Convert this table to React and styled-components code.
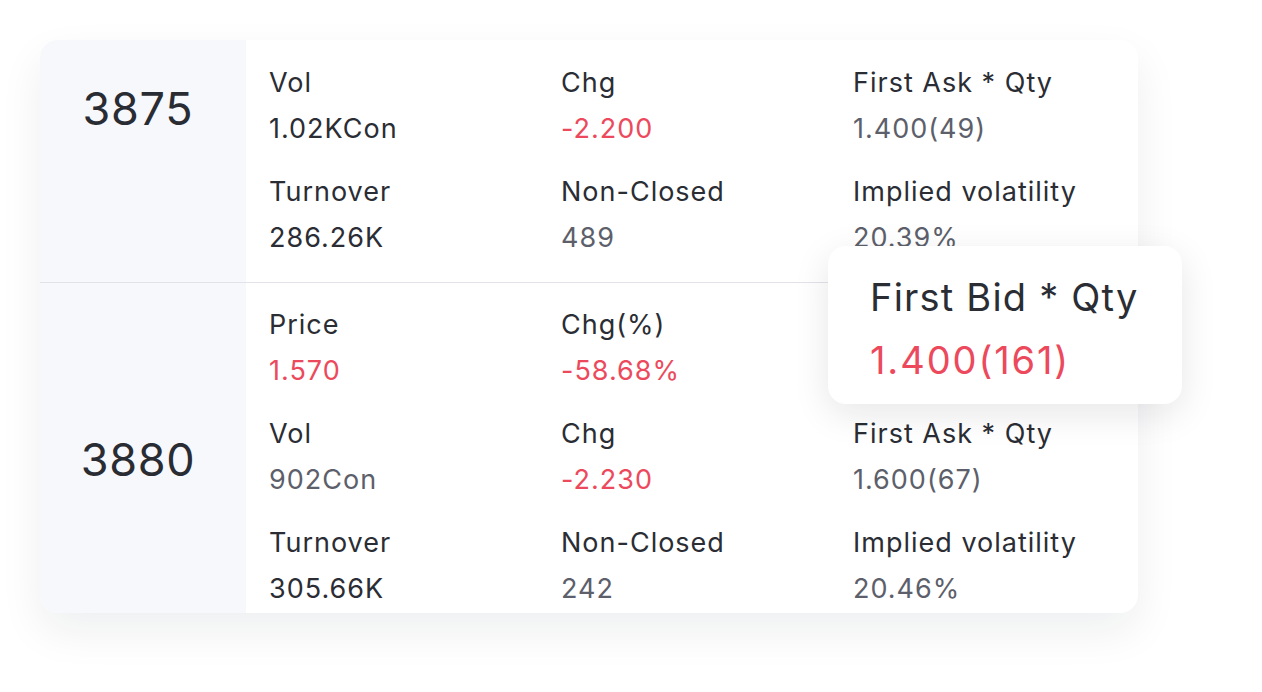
import React from "react";
import styled, { createGlobalStyle } from "styled-components";

const GlobalStyle = createGlobalStyle`
  body {
    margin: 0;
    background: #ffffff;
    font-family: Inter, "Noto Sans", "Liberation Sans", sans-serif;
  }
`;

const Page = styled.main`
  padding: 40px;
  height: 692px;
  box-sizing: border-box;
`;

const Card = styled.section`
  position: relative;
  width: 1098px;
  background: #ffffff;
  border-radius: 18px;
  box-shadow: 0 18px 44px rgba(20, 24, 40, 0.07);
`;

const Clip = styled.div`
  border-radius: 18px;
  overflow: hidden;
`;

const Row = styled.div`
  display: flex;
  border-top: ${(p) => (p.$first ? "none" : "1px solid #e2e3e8")};
`;

const Strike = styled.div`
  width: 206px;
  flex-shrink: 0;
  background: #f7f8fc;
  padding-top: ${(p) => p.$offset}px;
  text-align: center;
  padding-right: 10px;
  box-sizing: border-box;
  font-size: 45px;
  line-height: 52px;
  color: #2a2c33;
  letter-spacing: 0.7px;
`;

const Grid = styled.div`
  flex: 1;
  display: grid;
  grid-template-columns: repeat(3, 292px);
  row-gap: 27px;
  padding: ${(p) => p.$pad};
  padding-left: 23px;
`;

const Item = styled.div`
  display: flex;
  flex-direction: column;
  gap: 10px;
  visibility: ${(p) => (p.$covered ? "hidden" : "visible")};
`;

const Label = styled.span`
  font-size: 27px;
  line-height: 36px;
  color: #2b2d34;
  letter-spacing: 1px;
  white-space: nowrap;
`;

const tones = {
  dark: "#2b2d34",
  gray: "#5d5f6b",
  red: "#ec4a5c",
};

const Value = styled.span`
  font-size: 27px;
  line-height: 36px;
  letter-spacing: 1px;
  color: ${(p) => tones[p.$tone]};
  white-space: nowrap;
`;

const Popover = styled.div`
  position: absolute;
  left: 788px;
  top: 206px;
  width: 354px;
  height: 158px;
  box-sizing: border-box;
  padding: 29px 0 0 42px;
  background: #ffffff;
  border-radius: 18px;
  box-shadow: 0 10px 36px rgba(20, 24, 40, 0.1);
  display: flex;
  flex-direction: column;
  gap: 19px;
`;

const PopLabel = styled.span`
  font-size: 38px;
  line-height: 44px;
  color: #2b2d34;
  letter-spacing: 1.2px;
  white-space: nowrap;
`;

const PopValue = styled.span`
  font-size: 38px;
  line-height: 44px;
  color: #ec4a5c;
  letter-spacing: 1.9px;
  white-space: nowrap;
`;

const rows = [
  {
    strike: "3875",
    offset: 43,
    pad: "25px 0 26px",
    items: [
      ["Vol", "1.02KCon", "dark"],
      ["Chg", "-2.200", "red"],
      ["First Ask * Qty", "1.400(49)", "gray"],
      ["Turnover", "286.26K", "dark"],
      ["Non-Closed", "489", "gray"],
      ["Implied volatility", "20.39%", "gray"],
    ],
  },
  {
    strike: "3880",
    offset: 151,
    pad: "24px 0 6px",
    items: [
      ["Price", "1.570", "red"],
      ["Chg(%)", "-58.68%", "red"],
      ["First Bid * Qty", "1.400(161)", "red", true],
      ["Vol", "902Con", "gray"],
      ["Chg", "-2.230", "red"],
      ["First Ask * Qty", "1.600(67)", "gray"],
      ["Turnover", "305.66K", "dark"],
      ["Non-Closed", "242", "gray"],
      ["Implied volatility", "20.46%", "gray"],
    ],
  },
];

export default function App() {
  return (
    <Page>
      <GlobalStyle />
      <Card>
        <Clip>
          {rows.map((row, i) => (
            <Row key={row.strike} $first={i === 0}>
              <Strike $offset={row.offset}>{row.strike}</Strike>
              <Grid $pad={row.pad}>
                {row.items.map(([label, value, tone, covered], j) => (
                  <Item key={j} $covered={covered}>
                    <Label>{label}</Label>
                    <Value $tone={tone}>{value}</Value>
                  </Item>
                ))}
              </Grid>
            </Row>
          ))}
        </Clip>
        <Popover>
          <PopLabel>First Bid * Qty</PopLabel>
          <PopValue>1.400(161)</PopValue>
        </Popover>
      </Card>
    </Page>
  );
}
